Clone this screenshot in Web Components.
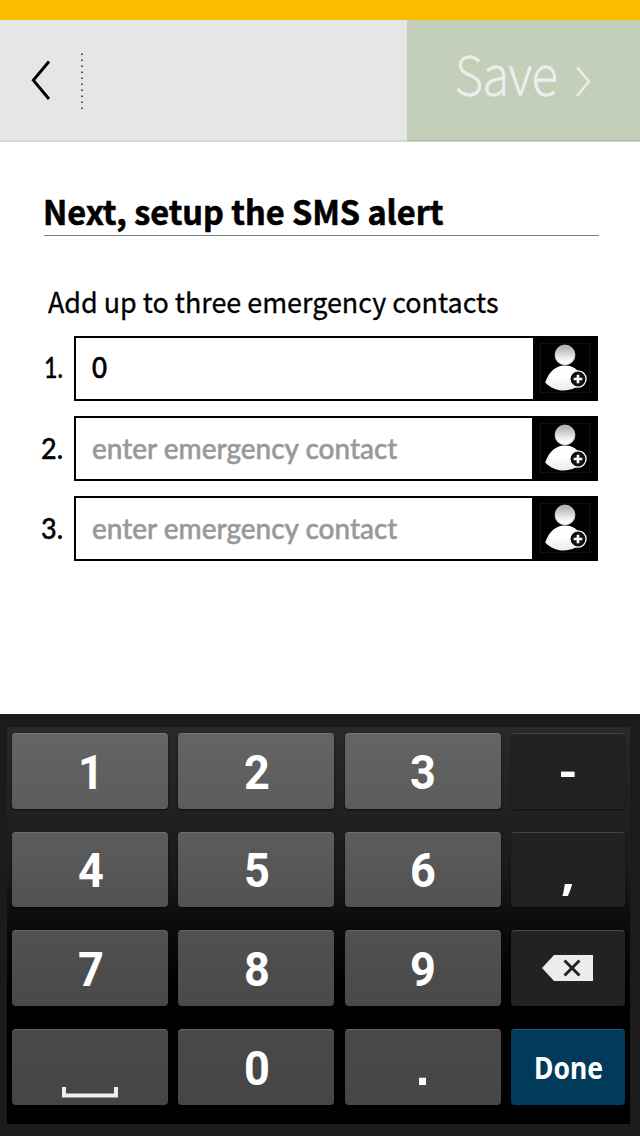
<!DOCTYPE html>
<html lang="en">
<head>
<meta charset="utf-8">
<title>SMS alert setup</title>
<style>
html,body{margin:0;padding:0;background:#fff}
</style>
</head>
<body>
<setup-screen></setup-screen>
<script>
const define = (name, html, ready) => {
  const t = document.createElement('template');
  t.innerHTML = html;
  customElements.define(name, class extends HTMLElement {
    connectedCallback() {
      if (this.shadowRoot) return;
      this.attachShadow({mode: 'open'}).append(t.content.cloneNode(true));
      if (ready) ready(this, this.shadowRoot);
    }
  });
};

/* one line of text condensed or widened to the width given in w, or by the factor in x */
define('fit-text', `<style>
:host{display:block;white-space:nowrap}
span{display:inline-block;transform-origin:0 50%}
</style><span><slot></slot></span>`, (el, root) => {
  const s = root.querySelector('span');
  const own = s.getBoundingClientRect().width;
  const w = +el.getAttribute('w') || own * el.getAttribute('x');
  s.style.transform = 'scaleX(' + w / own + ')';
  el.style.width = w + 'px';
});

define('app-header', `<style>
:host{display:flex;box-sizing:border-box;height:142px;border-top:20px solid #fcbc00;background:linear-gradient(#e6e6e6 120px,#d6d6d6 120px)}
.back{flex:1;display:flex;padding:33px 0 0 31px}
.back svg{display:block}
.save{width:233px;height:121px;box-sizing:border-box;border-bottom:1px solid #b0bca5;background:#c3cfb8;display:flex;padding-left:48px;color:#ededed}
.save fit-text{font:100 53px/104px "Noto Sans CJK SC",sans-serif;-webkit-text-stroke:1.4px #ededed}
.save svg{margin:46px 0 0 16px}
</style>
<div class="back"><svg width="60" height="58" fill="none"><path d="M18 8.5 2.3 27.3 18 46" stroke="#000" stroke-width="2.9"/><path d="M51 .5v57" stroke="#555" stroke-width="2" stroke-dasharray="1.6 4.4"/></svg></div>
<div class="save"><fit-text w="102.5">Save</fit-text><svg width="20" height="34" fill="none"><path d="M3 1.3 15 15.5 3 30" stroke="#ededed" stroke-width="2.5"/></svg></div>`);

define('contact-icon', `<style>:host{display:block;width:50px;height:50px}svg{display:block}</style>
<svg width="50" height="50"><defs><linearGradient id="h" x2="0" y2="1"><stop stop-color="#aaa"/><stop offset=".7" stop-color="#f2f2f2"/><stop offset="1" stop-color="#fff"/></linearGradient><linearGradient id="b" x2="0" y2="1"><stop offset=".4" stop-color="#fff"/><stop offset="1" stop-color="#ececec"/></linearGradient></defs>
<rect x=".5" y=".5" width="49" height="49" fill="none" stroke="#101010"/>
<path d="M5.200 39.500C9 28.500 16 22.600 25 22.600c7 0 11.500 3 15 8v11.500C30 49.500 15 50 5.200 39.500Z" fill="url(#b)"/>
<circle cx="25" cy="12" r="10" fill="url(#h)" stroke="#ddd" stroke-width=".7"/>
<circle cx="38" cy="36" r="8.100" fill="#111" stroke="#fff" stroke-width="1.300"/>
<path d="M38 31.700v8.600M33.700 36h8.600" stroke="#fff" stroke-width="2.700"/></svg>`);

define('contact-row', `<style>
:host{display:flex;height:65px;font-family:Lato,sans-serif;font-weight:500;color:#000}
.num{width:62.500px;margin-right:11.500px;display:flex;justify-content:flex-end;font-size:29px;line-height:62px;-webkit-text-stroke:.4px #000}
.box{display:flex;justify-content:space-between;box-sizing:border-box;width:524px;border:2px solid #000;padding-left:16px}
.val{font-size:29px;line-height:58px;-webkit-text-stroke:.6px #000}
:host([empty]) .val{color:#999;font-size:28px;line-height:61px;-webkit-text-stroke:.5px #999}
.pick{width:63px;box-sizing:border-box;padding:5px 0 0 7px;background:#000}
:host([empty]) .pick{width:64px;padding-left:8px}
:host([empty]) .num{line-height:64px}
</style><div class="num"><slot name="num"></slot></div><div class="box"><div class="val"><slot></slot></div><div class="pick"><contact-icon></contact-icon></div></div>`);

define('num-key', `<style>
:host{display:flex;justify-content:center;align-items:center;box-sizing:border-box;height:75.5px;padding:3px 0 0 1.500px;border-radius:4px;border-top:1.500px solid rgba(255,255,255,.17);background:var(--key,#555);font:700 49px/72px Roboto,sans-serif;color:#fff;box-shadow:0 1px 2px #0009}
:host([dark]){background:#222;padding-left:0}
:host([done]){background:#003b5b;font:700 30px/72px "Noto Sans",sans-serif;padding-top:2px}
:host([mark]){font-family:"Noto Sans",sans-serif;padding:2px 0 0}
:host([mark=square]){font-family:"Liberation Sans",sans-serif}
</style><slot></slot>`);

define('num-pad', `<style>
:host{display:block;box-sizing:border-box;height:422px;padding:13px 10px 12px 7px;background:#1b1b1b}
.pad{box-sizing:border-box;height:397px;padding:6px 5px;background:linear-gradient(#292929,#1a1a1a 37%,#0d0d0d 48%,#010101 65%,#000);display:grid;grid-template-columns:156px 156px 156px 114px;column-gap:10.300px;grid-template-rows:repeat(4,75.500px);row-gap:23.200px}
.r1{--key:linear-gradient(#646464,#5c5c5c)}.r2{--key:linear-gradient(#5c5c5c,#525252)}.r3{--key:linear-gradient(#515151,#494949)}.r4{--key:linear-gradient(#494949,#464646)}
svg{display:block}
.del{margin-top:-4px}
.space{margin:48px 2px 0 0}
</style><div class="pad">
<num-key class="r1"><fit-text x=".92">1</fit-text></num-key><num-key class="r1"><fit-text x=".92">2</fit-text></num-key><num-key class="r1"><fit-text x=".92">3</fit-text></num-key><num-key dark>-</num-key>
<num-key class="r2"><fit-text x=".92">4</fit-text></num-key><num-key class="r2"><fit-text x=".92">5</fit-text></num-key><num-key class="r2"><fit-text x=".92">6</fit-text></num-key><num-key dark mark>,</num-key>
<num-key class="r3"><fit-text x=".92">7</fit-text></num-key><num-key class="r3"><fit-text x=".92">8</fit-text></num-key><num-key class="r3"><fit-text x=".92">9</fit-text></num-key><num-key dark><svg class="del" width="52" height="28"><path d="M0 14 12 1h39v26H12Z" fill="#ececec"/><path d="m22.500 6.500 15 15m0-15-15 15" stroke="#222" stroke-width="2.900"/></svg></num-key>
<num-key class="r4"><svg class="space" width="56" height="11" fill="none"><path d="M2 0v8.500h52V0" stroke="#eee" stroke-width="4"/></svg></num-key><num-key class="r4"><fit-text x=".92">0</fit-text></num-key><num-key class="r4" mark="square">.</num-key><num-key done><fit-text w="69">Done</fit-text></num-key>
</div>`);

define('setup-screen', `<style>
:host{display:flex;flex-direction:column;width:640px;height:1136px;overflow:hidden;background:#fff;color:#000}
main{flex:1;display:flex;flex-direction:column}
h1{margin:45px 41px 0 44px;height:48px;border-bottom:1px solid #808080;font:700 33px/48px "Noto Sans CJK SC",sans-serif;-webkit-text-stroke:.6px #000}
h1 fit-text{margin-left:-1px}
p{margin:40px 0 0 48px;height:60px;font:400 28px/50px "Noto Sans CJK SC",sans-serif;-webkit-text-stroke:.3px #000}
.rows{display:flex;flex-direction:column;gap:15px}
</style><app-header></app-header>
<main><h1><fit-text w="400.5">Next, setup the SMS alert</fit-text></h1>
<p><fit-text w="450.500">Add up to three emergency contacts</fit-text></p>
<div class="rows">
<contact-row><fit-text slot="num" w="19">1.</fit-text><fit-text w="15">0</fit-text></contact-row>
<contact-row empty><fit-text slot="num" w="22">2.</fit-text><fit-text w="305.500">enter emergency contact</fit-text></contact-row>
<contact-row empty><fit-text slot="num" w="22">3.</fit-text><fit-text w="305.500">enter emergency contact</fit-text></contact-row>
</div></main>
<num-pad></num-pad>`);
</script>
</body>
</html>
